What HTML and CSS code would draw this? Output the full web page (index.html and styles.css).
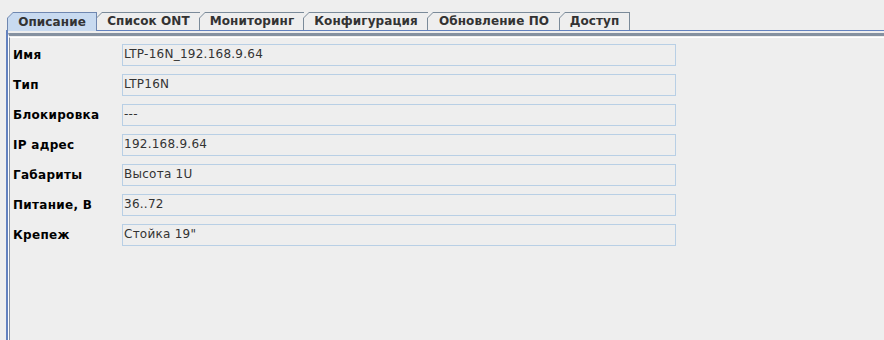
FILE: index.html
```html
<!DOCTYPE html>
<html>
<head>
<meta charset="utf-8">
<link rel="stylesheet" href="styles.css">
</head>
<body>
<div class="tabbed">
  <div class="tabrow">
    <div class="tab selected w1"><span>Описание</span></div>
    <div class="tab w2"><span>Список ONT</span></div>
    <div class="tab w3"><span>Мониторинг</span></div>
    <div class="tab w4"><span>Конфигурация</span></div>
    <div class="tab w5"><span>Обновление ПО</span></div>
    <div class="tab w6 last"><span>Доступ</span></div>
  </div>
  <div class="content">
    <div class="frame">
      <div class="panel">
        <div class="row"><div class="label">Имя</div><div class="field">LTP-16N_192.168.9.64</div></div>
        <div class="row"><div class="label">Тип</div><div class="field">LTP16N</div></div>
        <div class="row"><div class="label">Блокировка</div><div class="field">---</div></div>
        <div class="row"><div class="label">IP адрес</div><div class="field">192.168.9.64</div></div>
        <div class="row"><div class="label">Габариты</div><div class="field">Высота 1U</div></div>
        <div class="row"><div class="label">Питание, В</div><div class="field">36..72</div></div>
        <div class="row"><div class="label">Крепеж</div><div class="field">Стойка 19"</div></div>
      </div>
    </div>
  </div>
</div>
</body>
</html>
```
FILE: styles.css
```css
html, body {
  margin: 0;
  padding: 0;
  background: #eeeeee;
  height: 100%;
  overflow: hidden;
}
body {
  font-family: "DejaVu Sans", sans-serif;
  font-size: 12px;
}
.tabbed {
  padding-top: 12px;
  padding-left: 6px;
  height: calc(100% - 12px);
  display: flex;
  flex-direction: column;
}
.tabrow {
  display: flex;
  height: 18px;
  padding-left: 1px;
  border-bottom: 1px solid #6382bf;
}
.tab {
  height: 18px;
  background: #7a8a99;
  padding: 1px 0 0 1px;
  box-sizing: border-box;
  margin-left: -1px;
  clip-path: polygon(6px 0, 100% 0, 100% 100%, 0 100%, 0 6px);
}
.tab:first-child { margin-left: 0; }
.tab span {
  display: block;
  height: 100%;
  background: #eeeeee;
  clip-path: polygon(5px 0, 100% 0, 100% 100%, 0 100%, 0 5px);
  font-weight: bold;
  color: #333333;
  text-align: center;
  line-height: 17px;
  white-space: nowrap;
  letter-spacing: 0.1px;
}
.tab.last { padding-right: 1px; }
.tab.selected {
  position: relative;
  z-index: 1;
  height: 19px;
  margin-bottom: -1px;
  padding-right: 1px;
  background: #6f87b0;
}
.tab.selected span {
  background: #c8daf0;
  line-height: 18px;
}
.w1 { width: 90px; }
.w2 { width: 104px; }
.w3 { width: 105px; }
.w4 { width: 125px; }
.w5 { width: 133px; }
.w6 { width: 71px; }
.content {
  flex: 1;
  border-left: 2px solid #6382bf;
  display: flex;
  flex-direction: column;
}
.frame {
  flex: 1;
  margin-top: 2px;
  border-top: 3px solid #8591a0;
  border-left: 1px solid #ffffff;
  display: flex;
  flex-direction: column;
}
.panel {
  flex: 1;
  margin-top: 1px;
  border-top: 1px solid #ffffff;
  border-left: 1px solid #8591a0;
  padding: 6px 0 0 3px;
  display: flex;
  flex-direction: column;
  gap: 8px;
}
.row {
  display: flex;
  align-items: center;
  height: 22px;
}
.label {
  width: 109px;
  font-weight: bold;
  color: #000000;
  white-space: nowrap;
  letter-spacing: 0.3px;
}
.field {
  width: 554px;
  height: 22px;
  box-sizing: border-box;
  border: 1px solid #b8cfe5;
  padding-left: 1px;
  line-height: 19px;
  color: #333333;
  white-space: nowrap;
  letter-spacing: 0.25px;
}
```
